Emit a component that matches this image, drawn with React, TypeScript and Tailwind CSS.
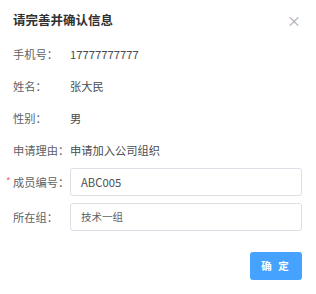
import React from 'react';

const rows = [
  { label: '手机号：', value: '17777777777' },
  { label: '姓名：', value: '张大民' },
  { label: '性别：', value: '男' },
  { label: '申请理由：', value: '申请加入公司组织' },
];

export default function App() {
  return (
    <div
      className="w-[316px] h-[294px] bg-white flex flex-col"
      style={{ fontFamily: '"Noto Sans CJK SC", "Liberation Sans", sans-serif' }}
    >
      {/* header */}
      <div className="flex items-center justify-between h-[40px] pl-[13px] pr-[15px]">
        <h2 className="text-[12.5px] font-bold text-[#303133] leading-none">请完善并确认信息</h2>
        <button className="text-[#a8abb2] text-[14px] leading-none">×</button>
      </div>

      <div className="flex flex-col pl-[13px] pr-[14px]">
        {rows.map((r) => (
          <div key={r.label} className="flex items-center h-[28px] mb-[4px] text-[11.25px] text-[#606266]">
            <span className="w-[57px] shrink-0 whitespace-nowrap">{r.label}</span>
            <span className="text-[#4a4c50]">{r.value}</span>
          </div>
        ))}

        <div className="flex items-center h-[28px] mb-[7px] text-[11.25px] text-[#606266]">
          <span className="relative w-[57px] shrink-0 whitespace-nowrap">
            <span className="absolute -left-[7px] top-[-1px] text-[#f56c6c] text-[10px]">*</span>
            成员编号：
          </span>
          <div className="flex-1 h-[28px] border border-[#dcdfe6] rounded-[3px] flex items-center px-[10px] text-[#4a4c50]">
            ABC005
          </div>
        </div>

        <div className="flex items-center h-[28px] text-[11.25px] text-[#606266]">
          <span className="w-[57px] shrink-0 whitespace-nowrap">所在组：</span>
          <div className="flex-1 h-[28px] border border-[#dcdfe6] rounded-[3px] flex items-center px-[10px] text-[10.5px] text-[#606266]">
            技术一组
          </div>
        </div>

        <div className="flex justify-end mt-[21px]">
          <button className="w-[52px] h-[28px] rounded-[3px] bg-[#45a2ff] text-white text-[10.5px] font-bold tracking-[2px]">
            确 定
          </button>
        </div>
      </div>
    </div>
  );
}
